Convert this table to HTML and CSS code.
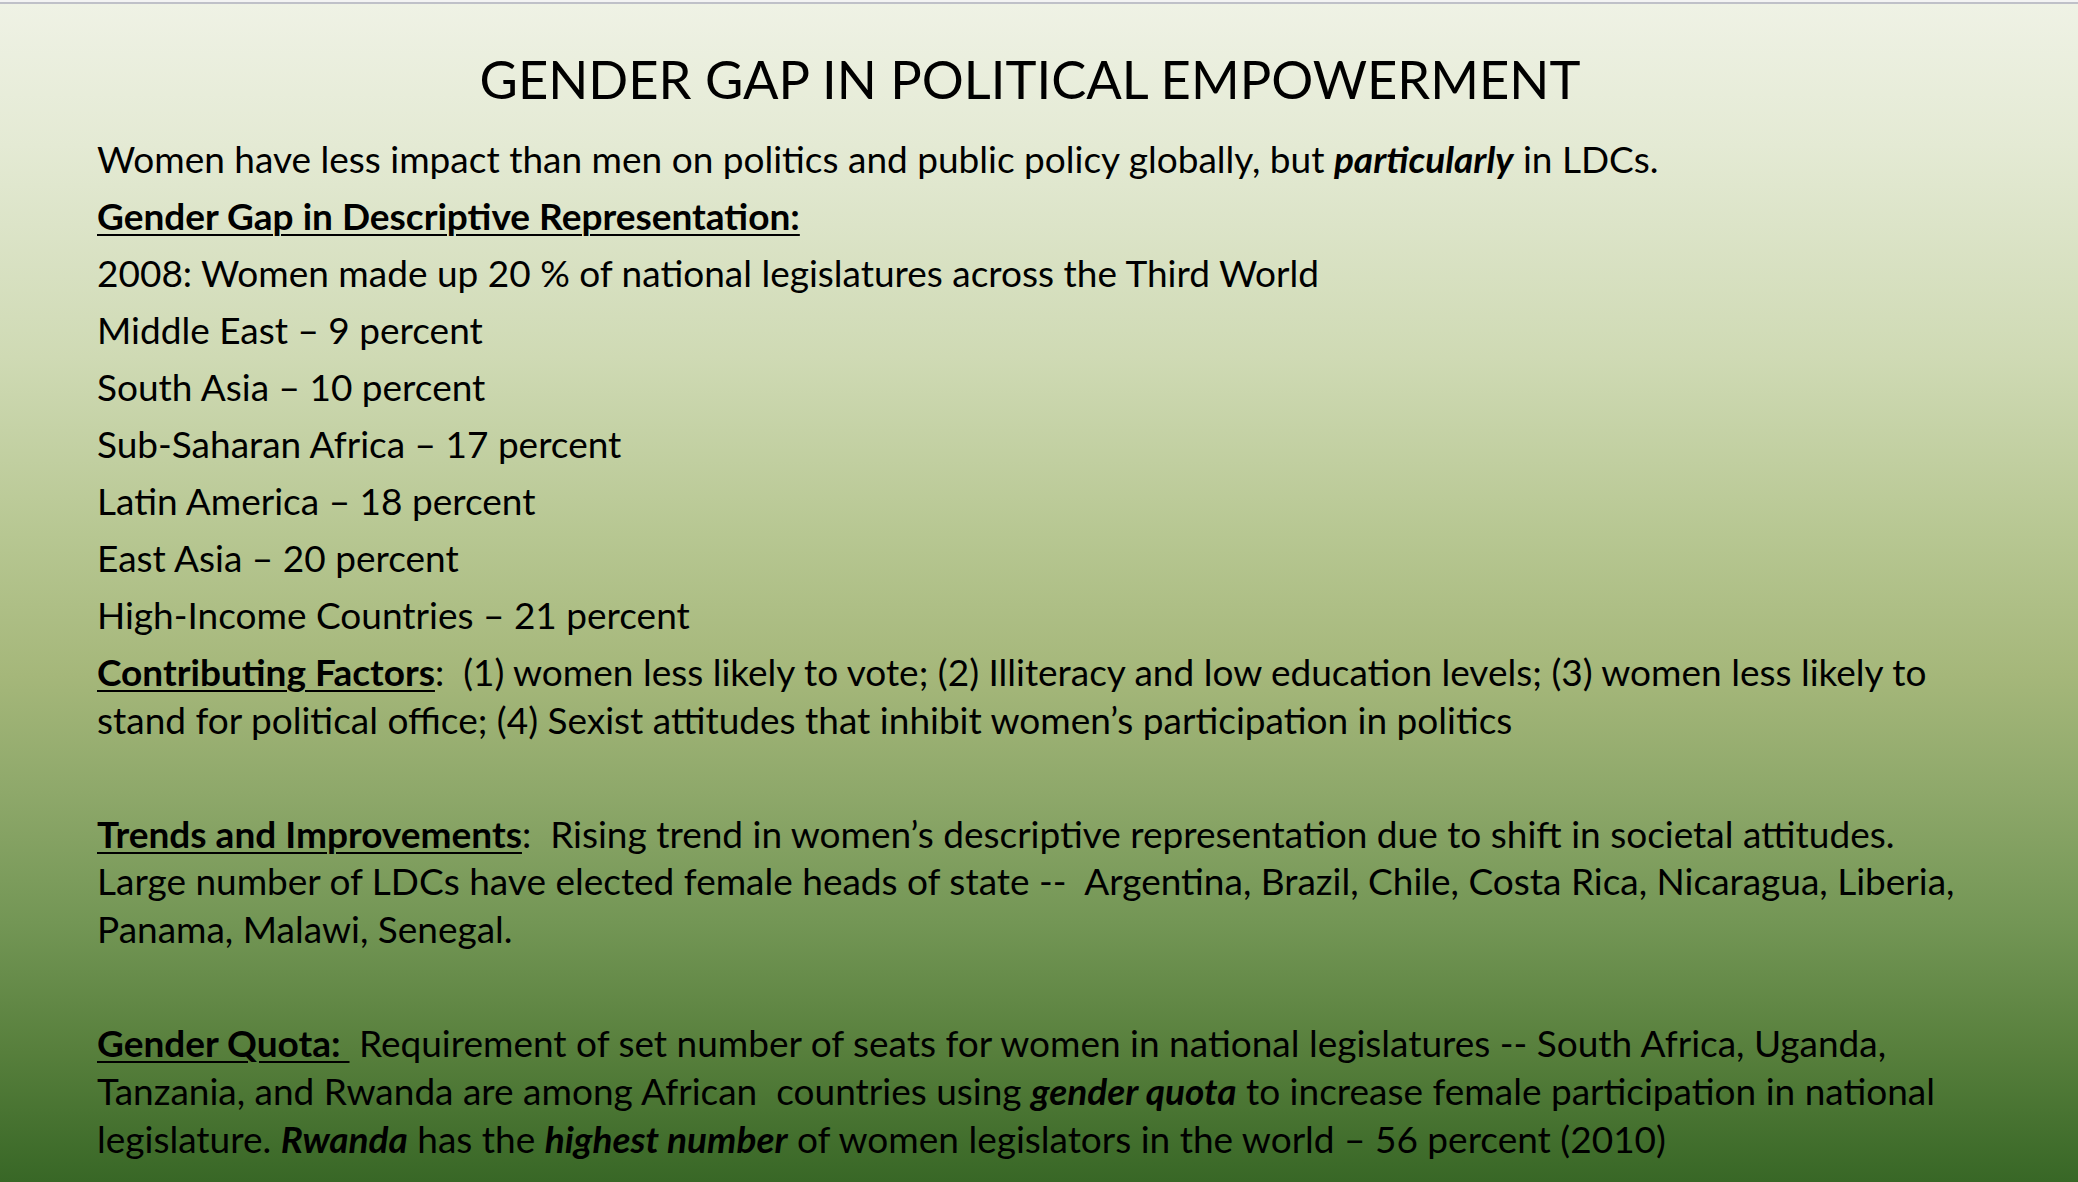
FILE: index.html
```html
<!DOCTYPE html>
<html lang="en">
<head>
<meta charset="utf-8">
<title>Gender Gap in Political Empowerment</title>
<link rel="stylesheet" href="styles.css">
</head>
<body>
<div class="slide">
  <h1 class="title">GENDER GAP IN POLITICAL EMPOWERMENT</h1>
  <div class="content">
    <p>Women have less impact than men on politics and public policy globally, but <b><i>particularly</i></b> in LDCs.</p>
    <p><b><u>Gender Gap in Descriptive Representation:</u></b></p>
    <p>2008: Women made up 20 % of national legislatures across the Third World</p>
    <p>Middle East – 9 percent</p>
    <p>South Asia – 10 percent</p>
    <p>Sub-Saharan Africa – 17 percent</p>
    <p>Latin America – 18 percent</p>
    <p>East Asia – 20 percent</p>
    <p>High-Income Countries – 21 percent</p>
    <p><b><u>Contributing Factors</u></b>:&nbsp; (1) women less likely to vote; (2) Illiteracy and low education levels; (3) women less likely to<br>stand for political office; (4) Sexist attitudes that inhibit women’s participation in politics</p>
    <p class="blank">&nbsp;</p>
    <p><b><u>Trends and Improvements</u></b>:&nbsp; Rising trend in women’s descriptive representation due to shift in societal attitudes.<br>Large number of LDCs have elected female heads of state --&nbsp; Argentina, Brazil, Chile, Costa Rica, Nicaragua, Liberia,<br>Panama, Malawi, Senegal.</p>
    <p class="blank">&nbsp;</p>
    <p><b><u>Gender Quota:&nbsp;</u></b> Requirement of set number of seats for women in national legislatures -- South Africa, Uganda,<br>Tanzania, and Rwanda are among African&nbsp; countries using <b><i>gender quota</i></b> to increase female participation in national<br>legislature. <b><i>Rwanda</i></b> has the <b><i>highest number</i></b> of women legislators in the world – 56 percent (2010)</p>
  </div>
</div>
</body>
</html>
```
FILE: styles.css
```css
html, body {
  margin: 0;
  padding: 0;
  background: #f3f3f3;
}
body {
  width: 2078px;
  height: 1182px;
  overflow: hidden;
  padding-top: 2px;
  box-sizing: border-box;
}
.slide {
  height: 1180px;
  box-sizing: border-box;
  border-top: 2px solid #bfc0c8;
  background: linear-gradient(to bottom,
    #eff2e5 0%,
    #e4ead4 12%,
    #cfdab4 30%,
    #b7c792 45%,
    #a5b77a 57%,
    #8ea86a 67%,
    #739655 78%,
    #577f3c 89%,
    #386726 100%);
  font-family: Lato, "Open Sans", sans-serif;
  color: #000;
  padding: 41px 0 0 97px;
}
.title {
  width: 1866px;
  margin: 0;
  text-align: center;
  font-weight: 400;
  font-size: 52.5px;
  line-height: 67px;
}
.content {
  margin-top: 23px;
  font-size: 37px;
  line-height: 47.7px;
}
.content p {
  margin: 9.3px 0 0 0;
  white-space: nowrap;
}
.content u {
  text-decoration-thickness: 2px;
  text-underline-offset: 4px;
}
```
